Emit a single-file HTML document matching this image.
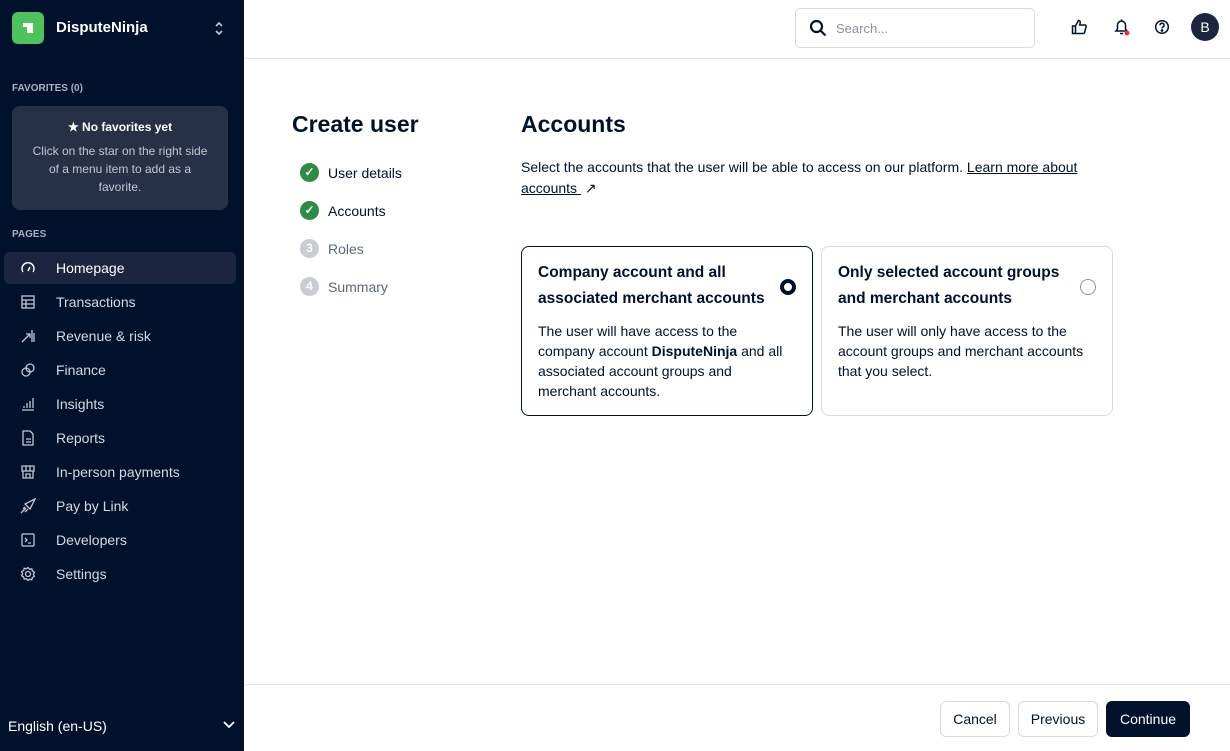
<!DOCTYPE html>
<html><head><meta charset="utf-8"><style>
*{box-sizing:border-box;margin:0;padding:0}
body{width:1230px;height:751px;overflow:hidden;font-family:"Liberation Sans",sans-serif;background:#fff;color:#00112c;position:relative}
.sb{position:absolute;left:0;top:0;width:244px;height:751px;background:#00112c;color:#fff}
.logo{position:absolute;left:12px;top:12px;width:32px;height:32px;background:#4fc15e;border-radius:6px}
.logo i{position:absolute;left:11px;top:11px;width:10px;height:10px;background:#fff}
.logo i:after{content:"";position:absolute;left:0;top:4px;width:4px;height:6px;background:#4fc15e}
.brand{position:absolute;left:56px;top:19px;font-size:15px;font-weight:bold}
.lbl{position:absolute;left:12px;font-size:10px;font-weight:bold;color:#a9b0bf}
.fav{position:absolute;left:12px;top:106px;width:216px;height:104px;background:#263046;border-radius:8px;text-align:center;font-size:12px;color:#c2c7d2;line-height:18px}
.fav b{display:block;color:#fff;margin-top:12px;margin-bottom:6px}
.nav{position:absolute;left:4px;width:232px;height:32px;border-radius:5px;font-size:14px;color:#d5d9e1;line-height:32px;padding-left:52px}
.nav.on{background:#1b2540;color:#fff}
.nav svg{position:absolute;left:16px;top:8px}
.lang{position:absolute;left:8px;top:718px;font-size:14px;color:#fff}
.top{position:absolute;left:244px;top:0;right:0;height:59px;border-bottom:1px solid #e3e5ea}
.search{position:absolute;left:551px;top:8px;width:240px;height:40px;border:1px solid #d8dbe2;border-radius:5px;font-size:13px;color:#8a92a3;padding:12px 0 0 40px}
.h1{position:absolute;font-size:23px;font-weight:bold;color:#00112c}
.step{position:absolute;left:300px;font-size:14px;color:#00112c}
.step i{position:absolute;left:0;top:0;width:19px;height:19px;border-radius:50%;font-style:normal;color:#fff;font-size:12px;text-align:center;line-height:19px;font-weight:bold}
.step span{position:absolute;left:28px;top:2px;white-space:nowrap}
.card{position:absolute;top:246px;width:292px;height:170px;border-radius:8px;padding:13px 16px}
.card h3{font-size:15.5px;font-weight:bold;line-height:26px;width:240px;color:#00112c}
.card p{font-size:14px;line-height:20px;margin-top:9px;color:#00112c}
.btn{position:absolute;top:701px;height:36px;border-radius:6px;font-size:14px;line-height:34px;text-align:center;border:1px solid #d8dbe2;color:#00112c}
</style></head><body>
<div class="sb">
 <div class="logo"><i></i></div>
 <div class="brand">DisputeNinja</div>
 <svg style="position:absolute;left:214px;top:21px" width="10" height="15" viewBox="0 0 10 15"><path d="M2 5l3-3 3 3M2 10l3 3 3-3" stroke="#c2c7d2" stroke-width="1.6" fill="none"/></svg>
 <div class="lbl" style="top:83px">FAVORITES (0)</div>
 <div class="fav"><b>★ No favorites yet</b>Click on the star on the right side<br>of a menu item to add as a<br>favorite.</div>
 <div class="lbl" style="top:229px">PAGES</div>
 <div class="nav on" style="top:252px"><svg width="16" height="16" viewBox="0 0 16 16" fill="none" stroke="#fff" stroke-width="1.4"><path d="M3 12a6 6 0 1 1 10 0M8 11l2-4"/></svg>Homepage</div>
 <div class="nav" style="top:286px"><svg width="16" height="16" viewBox="0 0 16 16" fill="none" stroke="#c2c7d2" stroke-width="1.3"><rect x="2" y="2" width="12" height="12"/><path d="M2 6h12M2 10h12M6 6v8"/></svg>Transactions</div>
 <div class="nav" style="top:320px"><svg width="16" height="16" viewBox="0 0 16 16" fill="none" stroke="#c2c7d2" stroke-width="1.3"><path d="M2 14l8-8M6 6h4v4M12 2v12M14 5v9"/></svg>Revenue &amp; risk</div>
 <div class="nav" style="top:354px"><svg width="16" height="16" viewBox="0 0 16 16" fill="none" stroke="#c2c7d2" stroke-width="1.3"><circle cx="6" cy="10" r="4"/><circle cx="10" cy="6" r="4"/></svg>Finance</div>
 <div class="nav" style="top:388px"><svg width="16" height="16" viewBox="0 0 16 16" fill="none" stroke="#c2c7d2" stroke-width="1.3"><path d="M2 14h12M4 12v-2M7 12V7M10 12V5M13 12V2"/></svg>Insights</div>
 <div class="nav" style="top:422px"><svg width="16" height="16" viewBox="0 0 16 16" fill="none" stroke="#c2c7d2" stroke-width="1.3"><path d="M3 1h7l3 3v11H3zM6 9h5M6 12h5"/></svg>Reports</div>
 <div class="nav" style="top:456px"><svg width="16" height="16" viewBox="0 0 16 16" fill="none" stroke="#c2c7d2" stroke-width="1.3"><path d="M2 2h12v5H2zM3 7v7h10V7M6 14v-4h4v4M6 2v5M10 2v5"/></svg>In-person payments</div>
 <div class="nav" style="top:490px"><svg width="16" height="16" viewBox="0 0 16 16" fill="none" stroke="#c2c7d2" stroke-width="1.3"><path d="M15 1L5 6l5 5zM1 15l5-5M3 11l2-2M5 14l3-3"/></svg>Pay by Link</div>
 <div class="nav" style="top:524px"><svg width="16" height="16" viewBox="0 0 16 16" fill="none" stroke="#c2c7d2" stroke-width="1.3"><rect x="2" y="2" width="12" height="12" rx="1"/><path d="M5 6l2 2-2 2M8 11h3"/></svg>Developers</div>
 <div class="nav" style="top:558px"><svg width="16" height="16" viewBox="0 0 16 16" fill="none" stroke="#c2c7d2" stroke-width="1.3"><circle cx="8" cy="8" r="2.5"/><path d="M8 1.5l1.5 1.8 2.3-.4.6 2.2 2 1.2-1 2 1 2-2 1.2-.6 2.2-2.3-.4L8 14.5l-1.5-1.8-2.3.4-.6-2.2-2-1.2 1-2-1-2 2-1.2.6-2.2 2.3.4z"/></svg>Settings</div>
 <div class="lang">English (en-US)</div>
 <svg style="position:absolute;left:223px;top:721px" width="12" height="8" viewBox="0 0 12 8"><path d="M1 1l5 5 5-5" stroke="#fff" stroke-width="1.8" fill="none"/></svg>
</div>
<div class="top">
 <div class="search">Search...</div>
 <svg style="position:absolute;left:565px;top:19px" width="18" height="18" viewBox="0 0 18 18" fill="none" stroke="#00112c" stroke-width="2.2"><circle cx="7.5" cy="7.5" r="5.5"/><path d="M11.5 11.5l5 5"/></svg>
 <svg style="position:absolute;left:827px;top:19px" width="16" height="16" viewBox="0 0 16 16" fill="none" stroke="#00112c" stroke-width="1.5"><path d="M1.5 7h3v7.5h-3zM4.5 7l3-5.5c1.3 0 2 1 1.7 2.3L8.7 6H14c.8 0 1.3.7 1.1 1.4l-1.5 6c-.2.7-.8 1.1-1.5 1.1H4.5"/></svg>
 <svg style="position:absolute;left:869px;top:18px" width="18" height="18" viewBox="0 0 18 18" fill="none" stroke="#00112c" stroke-width="1.5"><path d="M3 13h11l-1.5-2V7a4 4 0 0 0-8 0v4zM7 15.5h3M8.5 1.5v1.5"/><circle cx="14" cy="15" r="2.5" fill="#e0342f" stroke="none"/></svg>
 <svg style="position:absolute;left:910px;top:19px" width="16" height="16" viewBox="0 0 16 16" fill="none" stroke="#00112c" stroke-width="1.5"><circle cx="8" cy="8" r="6.3"/><path d="M6 6.3a2 2 0 1 1 2.6 1.9c-.5.2-.6.5-.6 1.2"/><circle cx="8" cy="11.5" r=".6" fill="#00112c"/></svg>
 <div style="position:absolute;left:947px;top:13px;width:28px;height:28px;border-radius:50%;background:#1b2540;color:#fff;font-size:14px;text-align:center;line-height:28px">B</div>
</div>
<div class="h1" style="left:292px;top:111px">Create user</div>
<div class="step" style="top:163px"><i style="background:#2f8a45">✓</i><span>User details</span></div>
<div class="step" style="top:201px"><i style="background:#2f8a45">✓</i><span>Accounts</span></div>
<div class="step" style="top:239px;color:#5c687c"><i style="background:#c9ccd4">3</i><span>Roles</span></div>
<div class="step" style="top:277px;color:#5c687c"><i style="background:#c9ccd4">4</i><span>Summary</span></div>
<div class="h1" style="left:521px;top:111px">Accounts</div>
<div style="position:absolute;left:521px;top:157px;width:600px;font-size:14px;line-height:21px">Select the accounts that the user will be able to access on our platform. <u>Learn more about<br>accounts </u> &nbsp;↗</div>
<div class="card" style="left:521px;border:1px solid #00112c"><h3>Company account and all associated merchant accounts</h3><p>The user will have access to the<br>company account <b>DisputeNinja</b> and all<br>associated account groups and<br>merchant accounts.</p>
<div style="position:absolute;right:16px;top:32px;width:16px;height:16px;border-radius:50%;border:4px solid #00112c"></div></div>
<div class="card" style="left:821px;border:1px solid #d8dbe2"><h3>Only selected account groups and merchant accounts</h3><p>The user will only have access to the<br>account groups and merchant accounts<br>that you select.</p>
<div style="position:absolute;right:16px;top:32px;width:16px;height:16px;border-radius:50%;border:1px solid #8a92a3"></div></div>
<div style="position:absolute;left:244px;right:0;top:684px;border-top:1px solid #e3e5ea"></div>
<div class="btn" style="left:940px;width:70px">Cancel</div>
<div class="btn" style="left:1018px;width:80px">Previous</div>
<div class="btn" style="left:1106px;width:84px;background:#00112c;color:#fff;border-color:#00112c">Continue</div>
</body></html>
